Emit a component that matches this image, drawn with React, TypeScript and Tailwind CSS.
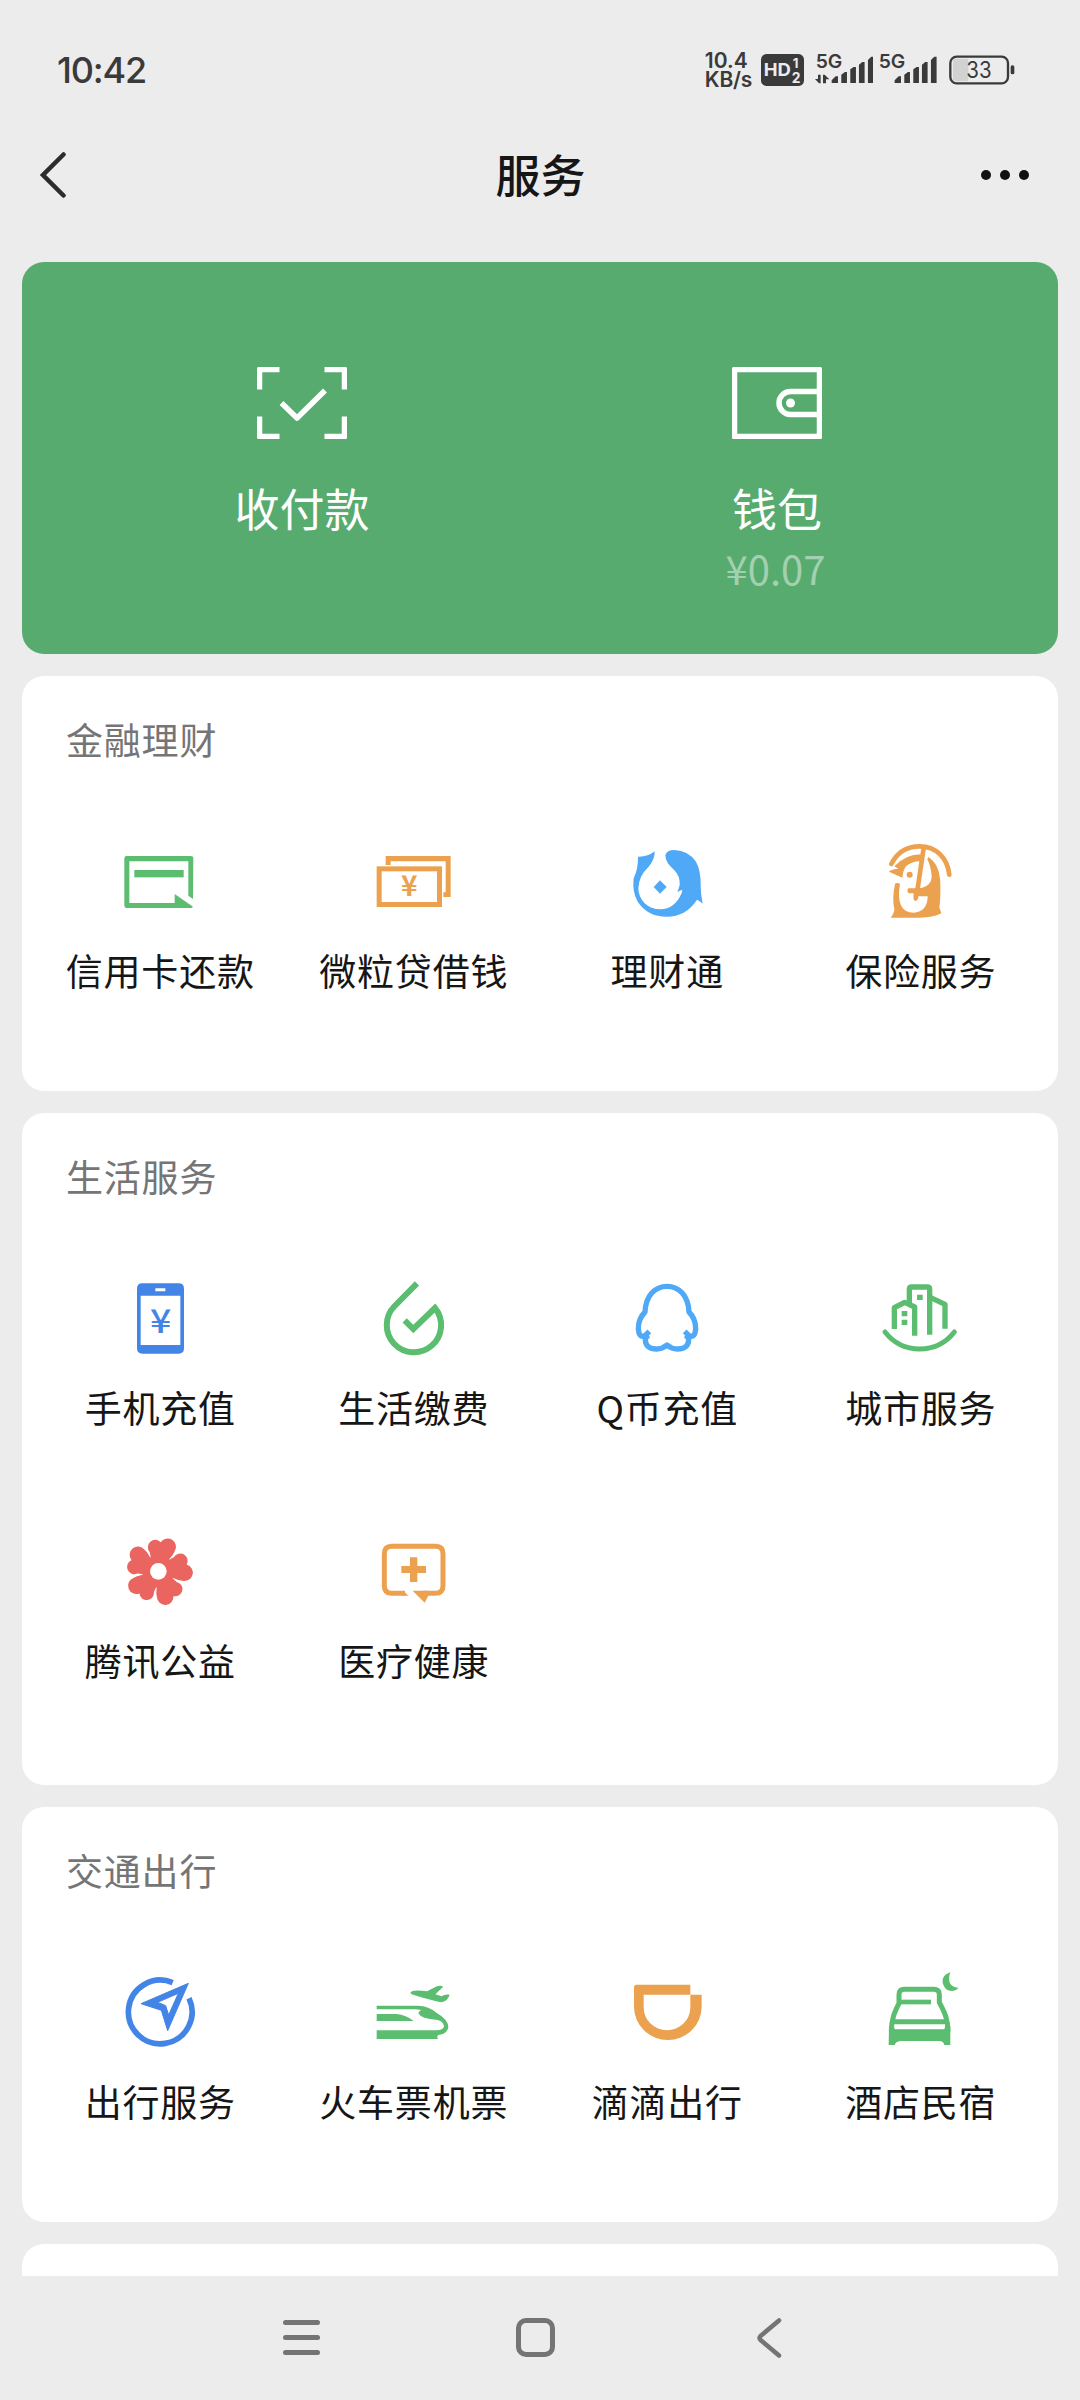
import type { ReactNode } from "react";

const GREEN = "#5bbd6f";
const ORANGE = "#eca14f";
const BLUE = "#4285e6";
const SKY = "#50a9f7";
const RED = "#eb6560";

type Service = { label: string; icon: ReactNode };

function Icon({ viewBox, children }: { viewBox: string; children: ReactNode }) {
  return (
    <svg viewBox={viewBox} className="size-[84px]" fill="none">
      {children}
    </svg>
  );
}

const CreditCard = (
  <Icon viewBox="234 60 252 252">
    <path
      fill={GREEN}
      d="M459 237 L445 227 V124 H268 V249 H404 V222 L459 260 L455 264 H260 Q253 264 253 257 V115 Q253 108 260 108 H452 Q460 108 460 115 Z"
    />
    <rect x="283" y="150" width="148" height="22" fill={GREEN} />
  </Icon>
);

const Loan = (
  <Icon viewBox="994 60 252 252">
    <rect x="1018.5" y="146.5" width="181" height="107" stroke={ORANGE} strokeWidth="15" />
    <path fill={ORANGE} d="M1038 135 V108 H1233 V231 H1211 V217 H1218 V124 H1053 V135 Z" />
    <text
      x="1109"
      y="229"
      textAnchor="middle"
      fontSize="84"
      fontWeight="700"
      fill={ORANGE}
      fontFamily="Noto Sans CJK SC, sans-serif"
    >
      ¥
    </text>
  </Icon>
);

const Wealth = (
  <Icon viewBox="197 60 252 252">
    <path
      fill={SKY}
      d="M236 110 Q265 111 286 94 Q287 118 268 140 Q238 168 237 205 A65 63 0 0 0 302 268 Q347 267 367 219 L369 209 Q362 212 354 216 Q359 205 361 195 Q362 167 345 151 Q318 128 318 106 Q322 90 345 90 Q388 92 410 125 Q425 152 424 198 Q424 222 430 251 Q422 243 413 239 Q380 290 322 290 Q265 290 235 245 Q218 215 223 175 Q237 145 236 110 Z"
    />
    <path fill={SKY} d="M302 181 L322 201 L302 221 L283 201 Z" />
  </Icon>
);

const Insurance = (
  <Icon viewBox="955 60 252 252">
    <path
      d="M995 132 C1012 98 1040 79 1080 79 C1128 79 1163 112 1169 164"
      stroke={ORANGE}
      strokeWidth="14"
      strokeLinecap="round"
    />
    <path d="M1092 84 L1073 212" stroke={ORANGE} strokeWidth="14" />
    <path fill={ORANGE} d="M1004 139 Q1038 103 1084 103 L1081 124 Q1054 124 1037 141 Q1029 155 1028 173 L988 155 Q990 149 1016 146 Z" />
    <path
      fill={ORANGE}
      d="M1106 111 Q1140 132 1142 190 Q1143 240 1139 262 L1145 280 Q1120 293 1080 293 H993 Q1004 280 1004 268 Q997 235 1006 191 Q1014 186 1021 192 Q1013 235 1025 258 Q1035 278 1062 278 Q1103 276 1104 229 H1076 Q1076 242 1067 243 Q1059 241 1062 220 H1047 Q1040 212 1046 205 H1066 L1086 204 Q1115 196 1116 170 Q1114 140 1103 118 Z"
    />
    <circle cx="1050" cy="164" r="9" fill={ORANGE} />
  </Icon>
);

const Phone = (
  <Icon viewBox="233 81 252 252">
    <path
      fill={BLUE}
      fillRule="evenodd"
      d="M306 100 H415 Q431 100 431 116 V295 Q431 311 415 311 H306 Q290 311 290 295 V116 Q290 100 306 100 Z M301 137 V285 H420 V137 Z M345 115 V124 H375 V115 Z"
    />
    <text
      x="361"
      y="250"
      textAnchor="middle"
      fontSize="98"
      fontWeight="500"
      fill={BLUE}
      fontFamily="Noto Sans CJK SC, sans-serif"
      textLength="64"
      lengthAdjust="spacingAndGlyphs"
    >
      ¥
    </text>
  </Icon>
);

const Utilities = (
  <Icon viewBox="993 81 252 252">
    <path d="M1131 100 L1064 168 A81.5 81.5 0 1 0 1185 174 L1120 237 L1094 211" stroke={GREEN} strokeWidth="18" />
  </Icon>
);

const QCoin = (
  <Icon viewBox="195 81 252 252">
    <g stroke={SKY} strokeWidth="16" strokeLinejoin="round">
      <path d="M268 244 L256 256 C242 264 236 254 235 236 C235 212 243 198 255 186 C257 137 285 109 321 109 C357 109 385 137 387 186 C399 198 407 212 407 236 C406 254 400 264 386 256 L374 244" />
      <path d="M376 256 Q386 262 386 271 Q384 297 352 297 Q335 297 321 285 Q307 297 290 297 Q258 297 256 271 Q256 262 266 256" />
    </g>
  </Icon>
);

const City = (
  <Icon viewBox="955 81 252 252">
    <g stroke={GREEN} strokeWidth="16" strokeLinejoin="round">
      <path d="M1065 257 V171 L1035 157 L1004 173 V237" />
      <path d="M1049 160 V118 Q1049 111 1056 111 H1103 Q1110 111 1110 118 V254" />
      <path d="M1113 143 L1156 163 V236" />
      <path d="M976 246 Q1016 297 1080 297 Q1144 297 1184 246" strokeWidth="15" strokeLinecap="round" />
    </g>
    <path fill={GREEN} d="M1072 134 h17 v16 h-17 Z M1026 183 h17 v16 h-17 Z M1026 209 h17 v16 h-17 Z" />
  </Icon>
);

const PETAL = "M340 184 L328 126 A19 19 0 0 1 361 97 A24 24 0 0 1 403 124 Q399 135 388 146 L368 184 Z";

const Charity = (
  <Icon viewBox="233 60 252 252">
    {[0, 72, 144, 216, 288].map((deg) => (
      <path key={deg} d={PETAL} fill={RED} transform={`rotate(${deg} 354 184)`} />
    ))}
    <circle cx="354" cy="184" r="48" fill={RED} />
    <circle cx="354" cy="184" r="25" fill="#fff" />
  </Icon>
);

const Medical = (
  <Icon viewBox="994 60 252 252">
    <path
      d="M1096 249.500 H1056 Q1034 249.500 1034 227 V131 Q1034 108.500 1056 108.500 H1188 Q1210 108.500 1210 131 V227 Q1210 249.500 1188 249.500 H1150"
      stroke={ORANGE}
      strokeWidth="15"
    />
    <path fill={ORANGE} d="M1119 242 H1166 V257 L1155 278 Z M1090 242 L1107 257 H1090 Z" />
    <path fill={ORANGE} d="M1111 142 h22 v26 h26 v21 h-26 v27 h-22 v-27 h-26 v-21 h26 Z" />
  </Icon>
);

const Travel = (
  <Icon viewBox="234 64 252 252">
    <path d="M450 146 A95.500 95.500 0 1 1 401 99" stroke={BLUE} strokeWidth="17" transform="translate(-3 0)" />
    <path
      fill={BLUE}
      fillRule="evenodd"
      stroke={BLUE}
      strokeWidth="3"
      strokeLinejoin="round"
      d="M445 101 L303 162 L364 182 L383 243 Z M415 131 L353 158 L377 168 L386 196 Z"
    />
  </Icon>
);

const Tickets = (
  <Icon viewBox="994 63 252 252">
    <path
      fill={GREEN}
      d="M1011 167 H1135 Q1168 168 1190 188 Q1226 208 1226 232 Q1222 253 1196 255 Q1190 258 1195 267 H1011 V241 H1190 Q1213 240 1213 228 Q1210 212 1190 209 Q1146 208 1136 190 Q1138 182 1145 180 Q1135 178 1125 178 H1011 Z"
    />
    <path fill={GREEN} d="M1011 192 H1070 Q1100 195 1122 213 H1011 Z" />
    <path
      fill={GREEN}
      d="M1112 128 Q1118 117 1162 124 L1192 109 Q1205 104 1210 111 L1187 133 L1206 139 Q1214 132 1230 134 Q1225 152 1206 157 Q1185 154 1116 133 Z"
    />
  </Icon>
);

const Didi = (
  <Icon viewBox="195 63 252 252">
    <path
      fill={ORANGE}
      d="M230 104 H391 V134 H251 V172 A70 69 0 0 0 391 172 V134 H425 V170 A101.500 100 0 0 1 222 170 V112 Q222 104 230 104 Z"
    />
  </Icon>
);

const Hotel = (
  <Icon viewBox="955 63 252 252">
    <g stroke={GREEN} strokeWidth="15">
      <path d="M995 244 C995 205 1006 185 1018 160 V134 Q1018 118 1034 118 H1122 Q1139 118 1139 134 V157 C1153 185 1165 205 1165 244" />
      <path d="M1018 156 H1114" strokeWidth="14" />
      <path d="M1002 215 H1158" />
    </g>
    <path
      fill={GREEN}
      d="M988 228 H1002 Q1004 236 1006 238 H1153 Q1156 236 1157 228 H1172 V285 H1154 Q1152 273 1138 273 H1022 Q1008 275 1005 285 H987 Z"
    />
    <path fill={GREEN} d="M1172 67 Q1145 76 1149 98 Q1155 124 1178 123 Q1190 122 1197 113 Q1180 114 1171 100 Q1165 85 1172 67 Z" />
  </Icon>
);

const finance: Service[] = [
  { label: "信用卡还款", icon: CreditCard },
  { label: "微粒贷借钱", icon: Loan },
  { label: "理财通", icon: Wealth },
  { label: "保险服务", icon: Insurance },
];

const life: Service[] = [
  { label: "手机充值", icon: Phone },
  { label: "生活缴费", icon: Utilities },
  { label: "Q币充值", icon: QCoin },
  { label: "城市服务", icon: City },
  { label: "腾讯公益", icon: Charity },
  { label: "医疗健康", icon: Medical },
];

const transport: Service[] = [
  { label: "出行服务", icon: Travel },
  { label: "火车票机票", icon: Tickets },
  { label: "滴滴出行", icon: Didi },
  { label: "酒店民宿", icon: Hotel },
];

function Section({ title, items, height }: { title: string; items: Service[]; height: string }) {
  return (
    <section className={`shrink-0 rounded-[22px] bg-white px-[11px] pt-[35px] ${height}`}>
      <h2 className="h-14 pl-[33px] text-[37px] leading-[56px] tracking-[0.800px] text-[#757575]">{title}</h2>
      <div className="grid grid-cols-4">
        {items.map((item) => (
          <div key={item.label} className="flex h-[253px] flex-col items-center pt-[73px]">
            {item.icon}
            <span className="mt-[18px] h-14 pl-px text-[37px] leading-[56px] tracking-[0.800px] whitespace-nowrap text-[#161616]">
              {item.label}
            </span>
          </div>
        ))}
      </div>
    </section>
  );
}

function Signal({ data }: { data?: boolean }) {
  return (
    <svg viewBox="0 -18 176 132" className="h-11 w-[58.600px]" fill="#3a3a3a">
      <text x="2" y="42" fontSize="57" fontWeight="600" fontFamily="Inter, sans-serif" textLength="80" lengthAdjust="spacingAndGlyphs">
        5G
      </text>
      {data && <path d="M9 62 h8 v26 h-5 L0 75 h9 Z M24 62 h5 L43 76 h-10 v12 h-9 Z" />}
      <path d="M50 87 V79 L62 67 H69 V87 Z M79 87 V62 L90 54 H96 V87 Z M106 87 V46 L116 39 H123 V87 Z M132 87 V32 L142 24 H149 V87 Z M159 87 V18 L169 8 H176 V87 Z" />
    </svg>
  );
}

function StatusBar() {
  return (
    <div className="flex h-[140px] shrink-0 items-center pr-[65px] pl-[57px] text-[#3a3a3a]">
      <span className="font-[Inter] text-[36px] font-medium tracking-[-1.200px]">10:42</span>
      <div className="ml-auto flex items-center">
        <div className="mr-2 flex w-[48px] flex-col font-[Inter] text-[21px] leading-[19px] font-semibold">
          <span>10.4</span>
          <span className="tracking-[-0.200px]">KB/s</span>
        </div>
        <svg viewBox="0 0 130 96" className="mr-[11px] h-8 w-[43px]">
          <rect width="130" height="96" rx="16" fill="#3a3a3a" />
          <g fill="#ececec" fontFamily="Inter, sans-serif" fontWeight="700">
            <text x="8" y="67" fontSize="54" textLength="82" lengthAdjust="spacingAndGlyphs">HD</text>
            <text x="96" y="42" fontSize="40">1</text>
            <text x="93" y="86" fontSize="42">2</text>
          </g>
        </svg>
        <Signal data />
        <div className="ml-[5px]">
          <Signal />
        </div>
        <svg viewBox="0 0 198 90" className="ml-3 h-[30px] w-[66px]">
          <path d="M19 11 H58 V79 H19 Q12 79 12 70 V20 Q12 11 19 11 Z" fill="#d2d2d2" />
          <rect x="4" y="5" width="173" height="80" rx="19" fill="none" stroke="#3a3a3a" strokeWidth="7" />
          <rect x="185" y="31" width="11" height="27" rx="5" fill="#3a3a3a" />
          <text x="90" y="69" textAnchor="middle" fontSize="67" fill="#3a3a3a" fontFamily="Inter, sans-serif" textLength="76" lengthAdjust="spacingAndGlyphs">
            33
          </text>
        </svg>
      </div>
    </div>
  );
}

export default function App() {
  return (
    <div className="flex h-[2400px] w-[1080px] flex-col overflow-hidden bg-[#ececec] font-['Noto_Sans_CJK_SC',sans-serif]">
      <StatusBar />

      <header className="mb-[52px] grid h-[70px] shrink-0 grid-cols-[1fr_auto_1fr] items-center pr-[51px] pl-10">
        <svg viewBox="0 0 45 50" className="h-[50px] w-[45px]" fill="none" stroke="#2c2c2c" strokeWidth="4.500" strokeLinecap="round">
          <path d="M23.500 4.500 L3 25 L23.500 45.500" />
        </svg>
        <h1 className="pb-[3px] pl-3 text-[45px] leading-none font-medium text-[#161616]">服务</h1>
        <div className="flex gap-[9px] justify-self-end">
          <span className="size-2.5 rounded-full bg-[#111]" />
          <span className="size-2.5 rounded-full bg-[#111]" />
          <span className="size-2.5 rounded-full bg-[#111]" />
        </div>
      </header>

      <main className="flex h-[2014px] shrink-0 flex-col gap-[22px] overflow-hidden px-[22px]">
        <section className="grid h-[392px] shrink-0 grid-cols-2 rounded-[22px] bg-[#58ab6f] pr-[44px] pl-[42px] text-white">
          <div className="flex flex-col items-center pt-[105px]">
            <svg viewBox="0 0 90 72" className="h-[72px] w-[90px]" fill="none" stroke="#fff" strokeWidth="5.5" strokeLinejoin="round">
              <path d="M2.500 22.500 V2.500 H22.500 M67.500 2.500 H87.500 V22.500 M87.500 49.500 V69.500 H67.500 M22.500 69.500 H2.500 V49.500" />
              <path d="M24.500 36 L40 51 L68 23.500" />
            </svg>
            <span className="mt-[34px] pl-px text-[45px] leading-[70px]">收付款</span>
          </div>
          <div className="flex flex-col items-center pt-[105px]">
            <svg viewBox="0 0 90 72" className="h-[72px] w-[90px]" fill="none" stroke="#fff" strokeWidth="5.5" strokeLinejoin="round">
              <rect x="2.500" y="2.500" width="85" height="67" />
              <path d="M87 24.500 H58.500 A11.500 11.500 0 0 0 58.500 47.500 H87" />
              <circle cx="58.500" cy="36" r="4.500" fill="#fff" stroke="none" />
            </svg>
            <span className="mt-[34px] pl-px text-[45px] leading-[70px]">钱包</span>
            <span className="pr-[2px] text-[40px] leading-[51px] text-[#a3d1b0]">¥0.07</span>
          </div>
        </section>

        <Section title="金融理财" items={finance} height="h-[415px]" />
        <Section title="生活服务" items={life} height="h-[672px]" />
        <Section title="交通出行" items={transport} height="h-[415px]" />
        <section className="h-[415px] shrink-0 rounded-[22px] bg-white" />
      </main>

      <nav className="flex grow items-center pb-px pl-[184px] text-[#747474]">
        <div className="flex w-[234px] justify-center">
          <div className="flex flex-col gap-[9.700px]">
            <span className="h-[5px] w-[37px] rounded-full bg-current" />
            <span className="h-[5px] w-[37px] rounded-full bg-current" />
            <span className="h-[5px] w-[37px] rounded-full bg-current" />
          </div>
        </div>
        <div className="flex w-[234px] justify-center">
          <div className="size-[39px] rounded-[10px] border-[5px] border-current" />
        </div>
        <div className="flex w-[234px] justify-center">
          <svg viewBox="0 0 26 40" className="h-10 w-[26px]" fill="none" stroke="currentColor" strokeWidth="4.500" strokeLinecap="round" strokeLinejoin="round">
            <path d="M23 2.500 L4.500 18 Q2.500 20 4.500 22 L23 37.500" />
          </svg>
        </div>
      </nav>
    </div>
  );
}
